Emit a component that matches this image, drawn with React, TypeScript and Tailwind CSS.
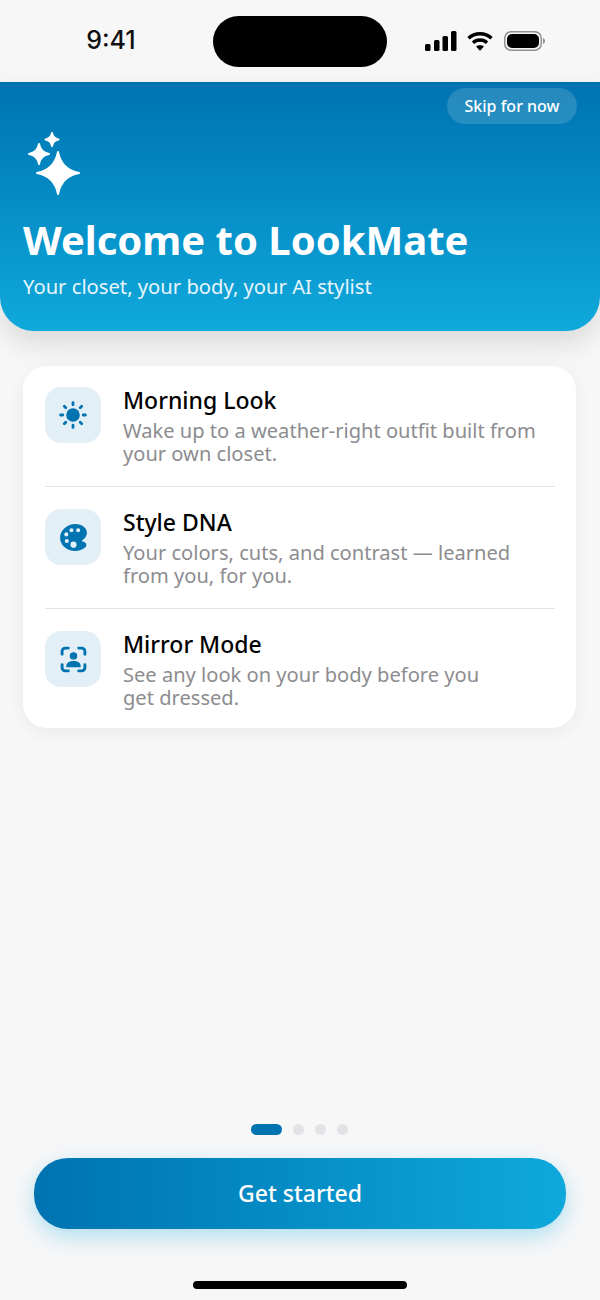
import { IoColorPalette } from "react-icons/io5";

const features = [
  { title: "Morning Look", lines: ["Wake up to a weather-right outfit built from", "your own closet."], icon: <SunIcon />, row: "h-[120px] pt-[21px]" },
  { title: "Style DNA", lines: ["Your colors, cuts, and contrast — learned", "from you, for you."], icon: <IoColorPalette size={33} color="#0073b1" />, row: "h-[122px] pt-[22px] border-t border-[#e3e3e5]" },
  { title: "Mirror Mode", lines: ["See any look on your body before you", "get dressed."], icon: <MirrorIcon />, row: "h-[120px] pt-[22px] border-t border-[#e3e3e5]" },
];

function SunIcon() {
  return (
    <svg width="28" height="28" viewBox="0 0 28 28" fill="none" stroke="#0073b1" strokeWidth="2.800" strokeLinecap="round">
      <circle cx="14" cy="14" r="6.800" fill="#0073b1" stroke="none" />
      <path d="M14 1.600v2.200M14 24.200v2.200M1.600 14h2.200M24.200 14h2.200M5.300 5.300l1.500 1.500M21.200 21.200l1.500 1.500M5.300 22.700l1.500-1.500M21.200 6.800l1.500-1.500" />
    </svg>
  );
}

function MirrorIcon() {
  return (
    <svg width="29" height="29" viewBox="0 0 28 28" fill="none">
      <path d="M3 9V6a3 3 0 0 1 3-3h3M19 3h3a3 3 0 0 1 3 3v3M25 19v3a3 3 0 0 1-3 3h-3M9 25H6a3 3 0 0 1-3-3v-3" stroke="#0073b1" strokeWidth="2.800" strokeLinecap="round" />
      <circle cx="14" cy="10.500" r="3.600" fill="#0073b1" />
      <path d="M7 20.500c0-3.200 3.200-5 7-5s7 1.800 7 5c0 .6-.4 1-1 1H8c-.6 0-1-.4-1-1Z" fill="#0073b1" />
    </svg>
  );
}

function Star({ cx, cy, r, k = 0.14 }: { cx: number; cy: number; r: number; k?: number }) {
  const q = r * k;
  return (
    <path
      d={`M${cx} ${cy - r}Q${cx + q} ${cy - q} ${cx + r} ${cy}Q${cx + q} ${cy + q} ${cx} ${cy + r}Q${cx - q} ${cy + q} ${cx - r} ${cy}Q${cx - q} ${cy - q} ${cx} ${cy - r}Z`}
    />
  );
}

function Sparkles() {
  return (
    <svg width="56" height="66" viewBox="0 0 56 66" fill="white" stroke="white" strokeWidth="2" strokeLinejoin="round">
      <Star cx={25} cy={7.500} r={6.500} />
      <Star cx={12} cy={22} r={10} />
      <Star cx={31} cy={41} r={21} k={0.16} />
    </svg>
  );
}

function StatusBar() {
  return (
    <div className="flex h-[82px] shrink-0 items-start bg-[#f7f7f8]">
      <div className="flex w-[213px] justify-center pl-[9px] pt-[24px] text-[25px] font-medium leading-[33px] text-[#111111] [font-family:Inter,sans-serif]">
        9:41
      </div>
      <div className="mt-[16px] h-[51px] w-[174px] rounded-[26px] bg-black" />
      <div className="flex items-center gap-[9px] pl-[38px] pt-[31px]">
        <svg width="32" height="20" viewBox="0 0 32 20" fill="black">
          <rect x="0" y="13" width="5.500" height="7" rx="1.500" />
          <rect x="9" y="9" width="5.500" height="11" rx="1.500" />
          <rect x="17.500" y="5" width="5.500" height="15" rx="1.500" />
          <rect x="26" y="0" width="5.500" height="20" rx="1.500" />
        </svg>
        <svg width="28" height="20" viewBox="0 0 26 20" fill="none" stroke="black" strokeWidth="3.400">
          <path d="M1.500 7.200C7.800 1.300 18.200 1.300 24.500 7.200" />
          <path d="M6 11.800c4-3.700 10-3.700 14 0" />
          <path d="M13 19.800l-4-4.300c2.300-1.800 5.700-1.800 8 0l-4 4.300Z" fill="black" stroke="none" />
        </svg>
        <svg width="42" height="20" viewBox="0 0 42 20" fill="none" className="ml-[1px]">
          <rect x="0.750" y="0.750" width="36.500" height="18.500" rx="6.500" stroke="#8f8f8f" strokeWidth="1.500" />
          <rect x="3" y="3" width="32" height="14" rx="5" fill="black" />
          <path d="M39 7v6c1.300-.6 2-1.700 2-3s-.7-2.400-2-3Z" fill="#8f8f8f" />
        </svg>
      </div>
    </div>
  );
}

export default function App() {
  return (
    <div className="flex h-[1300px] w-[600px] flex-col overflow-hidden bg-[#f7f7f8] [font-family:'Noto_Sans',sans-serif]">
      <StatusBar />

      <header className="relative h-[249px] shrink-0 rounded-b-[34px] bg-gradient-to-b from-[#0073b1] to-[#10a9dc] px-[23px] pt-[50px] shadow-[0_12px_28px_rgba(0,0,0,0.12)]">
        <button className="absolute right-[23px] top-[6px] flex h-[36px] w-[130px] items-center justify-center rounded-full bg-white/15 text-[16px] font-medium text-white">
          Skip for now
        </button>
        <div className="pl-[4px]">
          <Sparkles />
        </div>
        <h1 className="mt-[17px] text-[40px] font-bold leading-[50px] text-white">Welcome to LookMate</h1>
        <p className="mt-[7px] text-[20.200px] leading-[28px] text-white/90">Your closet, your body, your AI stylist</p>
      </header>

      <section className="ml-[23px] mr-[24px] mt-[35px] rounded-[24px] bg-white pl-[22px] pr-[21px] shadow-[0_4px_18px_rgba(0,0,0,0.06)]">
        {features.map((feature) => (
          <div key={feature.title} className={`flex gap-[22px] ${feature.row}`}>
            <div className="flex h-[56px] w-[56px] shrink-0 items-center justify-center rounded-[16px] bg-[#e3eff6]">
              {feature.icon}
            </div>
            <div>
              <h2 className="-mt-[2px] text-[23px] font-medium leading-[30px] text-black">{feature.title}</h2>
              <p className="mt-[4px] text-[20.100px] leading-[23px] text-[#8c8c8f]">
                {feature.lines[0]}
                <br />
                {feature.lines[1]}
              </p>
            </div>
          </div>
        ))}
      </section>

      <div className="flex-1" />

      <div className="flex items-center justify-center gap-[11px] pr-[1px]">
        <span className="h-[11px] w-[31px] rounded-full bg-[#0073b1]" />
        <span className="h-[11px] w-[11px] rounded-full bg-[#e2e3e6]" />
        <span className="h-[11px] w-[11px] rounded-full bg-[#e2e3e6]" />
        <span className="h-[11px] w-[11px] rounded-full bg-[#e2e3e6]" />
      </div>

      <button className="mx-[34px] mt-[23px] flex h-[71px] shrink-0 items-center justify-center rounded-[34px] bg-gradient-to-r from-[#0073b1] to-[#10a9dc] text-[23px] font-medium text-white shadow-[0_8px_22px_rgba(16,169,220,0.3)]">
        Get started
      </button>

      <div className="mb-[11px] mt-[52px] h-[8px] w-[214px] self-center rounded-full bg-black" />
    </div>
  );
}
